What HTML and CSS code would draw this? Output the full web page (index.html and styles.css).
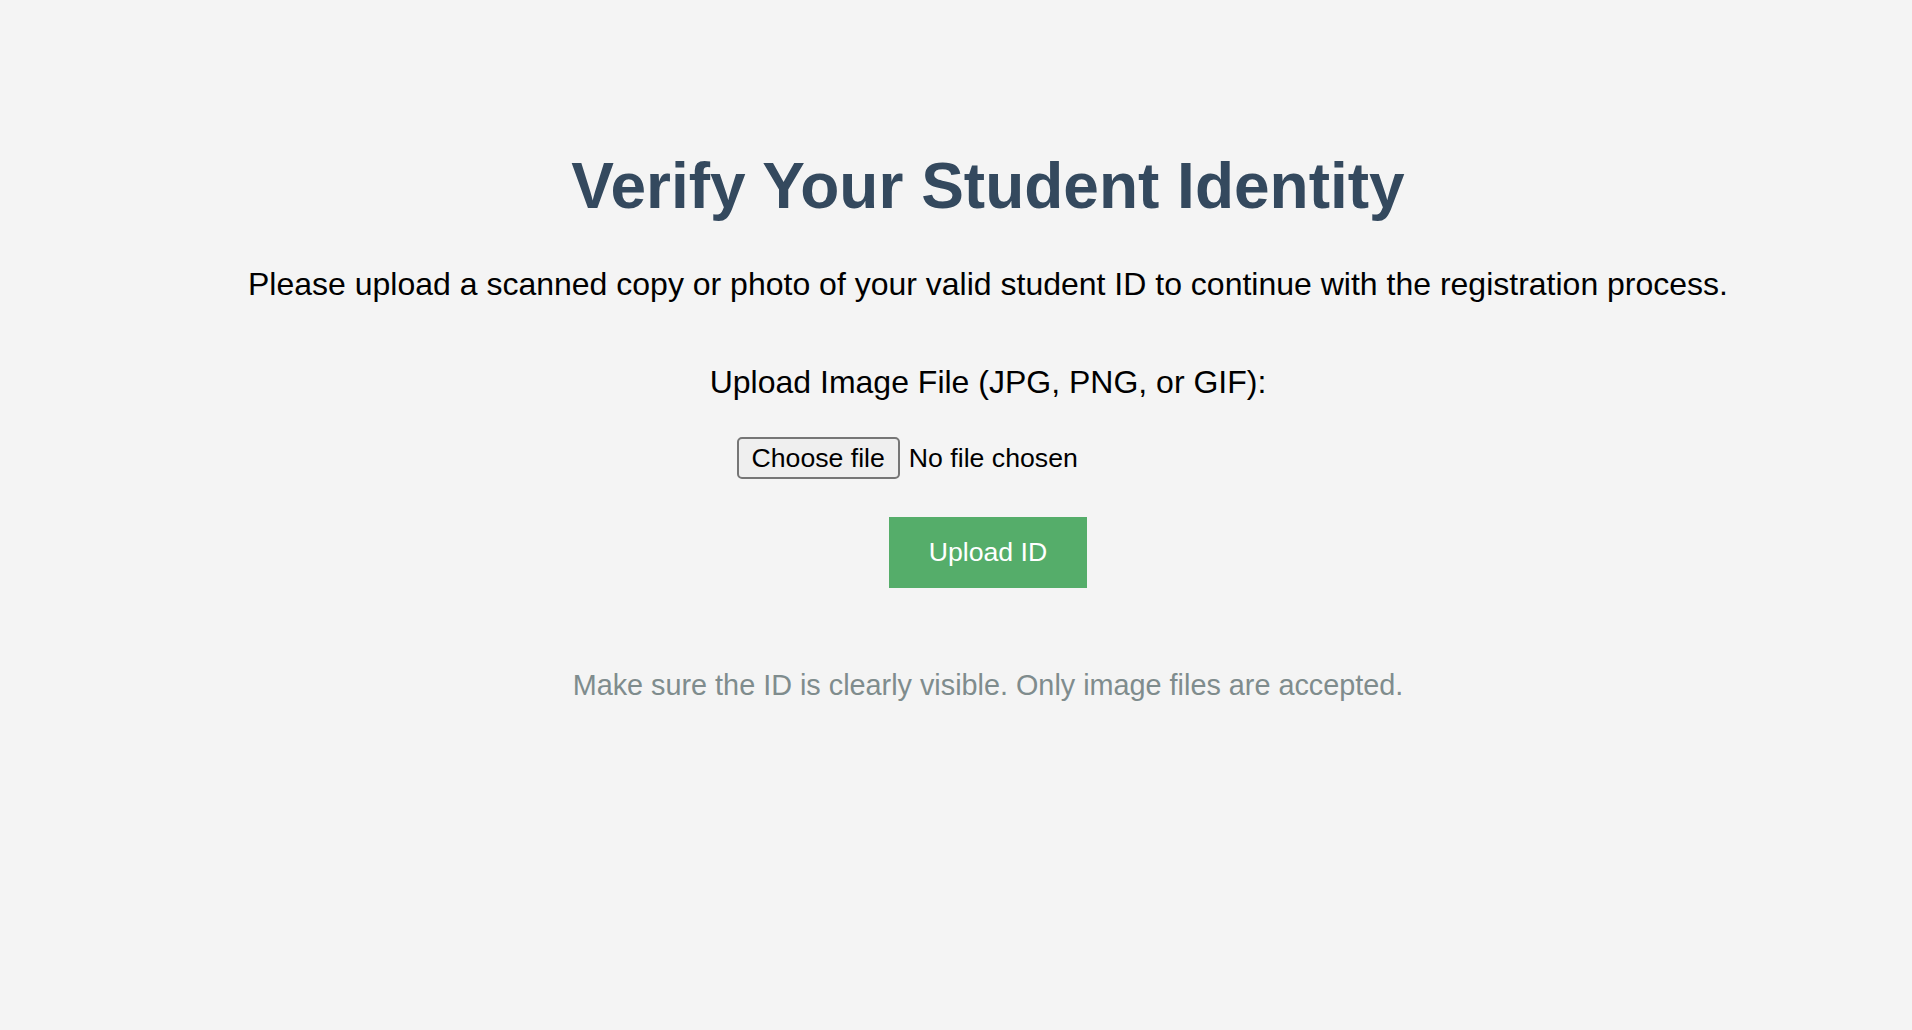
FILE: index.html
```html
<!DOCTYPE html>
<html lang="en">
<head>
<meta charset="utf-8">
<title>Verify Your Student Identity</title>
<link rel="stylesheet" href="styles.css">
</head>
<body>
  <main class="page">
    <h1 class="title">Verify Your Student Identity</h1>
    <p class="intro">Please upload a scanned copy or photo of your valid student ID to continue with the registration process.</p>
    <form class="upload-form" onsubmit="return false;">
      <label class="file-label" for="student-id">Upload Image File (JPG, PNG, or GIF):</label>
      <div class="file-field">
        <input class="file-input" type="file" id="student-id" name="student-id" accept="image/*">
        <label class="choose-btn" for="student-id">Choose file</label>
        <span class="file-status">No file chosen</span>
      </div>
      <button class="upload-btn" type="submit">Upload ID</button>
    </form>
    <p class="note">Make sure the ID is clearly visible. Only image files are accepted.</p>
  </main>
</body>
</html>
```
FILE: styles.css
```css
html, body {
  margin: 0;
  background: #f4f4f4;
}

body {
  font-family: "Liberation Sans", Arial, Helvetica, sans-serif;
  color: #000;
}

.page {
  padding: 149px 16px 0 80px;
  text-align: center;
}

.title {
  margin: 0;
  font-size: 64px;
  line-height: 74px;
  font-weight: bold;
  color: #34495e;
}

.intro {
  margin: 43px 0 0;
  font-size: 32px;
  line-height: 37px;
}

.upload-form {
  display: flex;
  flex-direction: column;
  align-items: center;
  margin-top: 61px;
}

.file-label {
  display: block;
  font-size: 32px;
  line-height: 37px;
}

.file-field {
  position: relative;
  margin-top: 36px;
  width: 503px;
  display: flex;
  align-items: center;
  gap: 9px;
  font-size: 26.67px;
}

.file-input {
  position: absolute;
  width: 1px;
  height: 1px;
  opacity: 0;
  overflow: hidden;
}

.choose-btn {
  box-sizing: border-box;
  height: 42px;
  padding: 0 13px;
  display: flex;
  align-items: center;
  border: 2px solid #767676;
  border-radius: 5px;
  background: #efefef;
  color: #000;
  line-height: 1;
  cursor: default;
}

.file-status {
  color: #000;
}

.upload-btn {
  margin-top: 38px;
  padding: 20px 40px;
  border: none;
  background: #55ad6a;
  color: #fff;
  font-family: "Liberation Sans", Arial, Helvetica, sans-serif;
  font-size: 26.67px;
  cursor: pointer;
}

.note {
  margin: 81px 0 0;
  font-size: 28.8px;
  line-height: 33px;
  color: #7f8c8d;
}
```
